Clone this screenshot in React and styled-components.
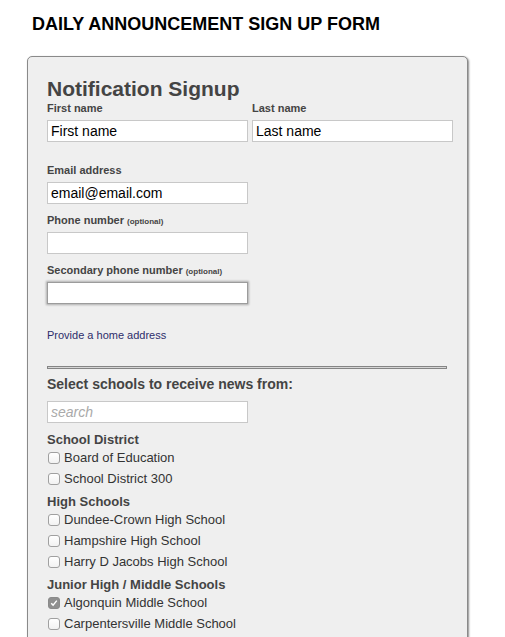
import styled, { createGlobalStyle } from 'styled-components';

const GlobalStyle = createGlobalStyle`
    body {
        margin: 0;
        background: #fff;
        font-family: "Liberation Sans", Arial, Helvetica, sans-serif;
    }
`;

const Page = styled.div`
    padding-top: 14px;
    padding-bottom: 40px;
`;

const Title = styled.h1`
    margin: 0 0 0 32px;
    font-size: 18px;
    line-height: 21px;
    font-weight: bold;
    color: #000;
`;

const Panel = styled.div`
    box-sizing: border-box;
    width: 441px;
    margin: 21px 0 0 27px;
    padding: 20px 19px 40px;
    background: #efefef;
    border: 1px solid #8a8a8a;
    border-radius: 5px;
    box-shadow: 1px 1px 2px rgba(0, 0, 0, 0.45);
`;

const Heading = styled.h2`
    margin: 0;
    font-size: 21px;
    line-height: 24px;
    font-weight: bold;
    color: #444;
`;

const NameRow = styled.div`
    display: grid;
    grid-template-columns: 201px 201px;
    column-gap: 4px;
    margin: 1px 0 22px;
`;

const Field = styled.div`
    display: flex;
    flex-direction: column;
    margin-bottom: ${(p) => (p.$last ? 0 : '10px')};
`;

const Label = styled.label`
    font-size: 11px;
    line-height: 13px;
    font-weight: bold;
    color: #444;
    margin-bottom: 5px;
`;

const Optional = styled.span`
    font-size: 8px;
    line-height: 1;
    font-weight: bold;
    margin-left: 3px;
`;

const TextInput = styled.input`
    box-sizing: border-box;
    width: 201px;
    height: 22px;
    margin: 0;
    padding: 0 3px;
    font-family: inherit;
    font-size: 14px;
    color: #000;
    background: #fff;
    border: 1px solid ${(p) => (p.$focused ? '#9c9c9c' : '#c8c8c8')};
    border-radius: 0;
    outline: none;
    box-shadow: ${(p) => (p.$focused ? '0 0 2px 1px rgba(0, 0, 0, 0.28)' : 'none')};

    &::placeholder {
        color: #aaa;
        font-style: italic;
    }
`;

const AddressLink = styled.a`
    display: block;
    margin-top: 25px;
    font-size: 11px;
    line-height: 13px;
    color: #2d2d6b;
    text-decoration: none;
`;

const Divider = styled.div`
    box-sizing: content-box;
    width: 398px;
    height: 1px;
    margin-top: 24px;
    background: #d6d6d6;
    border: 1px solid #858585;
`;

const SectionTitle = styled.h3`
    margin: 7px 0 8px;
    font-size: 14px;
    line-height: 17px;
    font-weight: bold;
    color: #444;
`;

const SchoolList = styled.div`
    margin-top: 9px;
`;

const GroupHeading = styled.div`
    margin-top: 5px;
    font-size: 13px;
    line-height: 15px;
    font-weight: bold;
    color: #444;
`;

const CheckRow = styled.label`
    display: flex;
    align-items: center;
    gap: 4px;
    height: 21px;
    font-size: 13px;
    color: #333;
`;

const Box = styled.span`
    box-sizing: border-box;
    width: 12px;
    height: 12px;
    margin-left: 1px;
    border-radius: 3px;
    border: 1px solid ${(p) => (p.$checked ? '#8a8a8a' : '#a0a0a0')};
    background: ${(p) => (p.$checked ? '#8f8f8f' : 'linear-gradient(#fff, #f2f2f2)')};
    display: flex;
    align-items: center;
    justify-content: center;
`;

const schoolGroups = [
    { name: 'School District', schools: ['Board of Education', 'School District 300'] },
    { name: 'High Schools', schools: ['Dundee-Crown High School', 'Hampshire High School', 'Harry D Jacobs High School'] },
    { name: 'Junior High / Middle Schools', schools: ['Algonquin Middle School', 'Carpentersville Middle School'] },
];

const checked = ['Algonquin Middle School'];

const Checkbox = ({ on }) => (
    <Box $checked={on}>
        {on && (
            <svg width="8" height="8" viewBox="0 0 8 8">
                <path d="M1.2 4.2 L3.1 6.1 L6.8 1.6" fill="none" stroke="#fff" strokeWidth="1.4" />
            </svg>
        )}
    </Box>
);

const App = () => (
    <Page>
        <GlobalStyle />
        <Title>DAILY ANNOUNCEMENT SIGN UP FORM</Title>
        <Panel>
            <Heading>Notification Signup</Heading>
            <NameRow>
                <Field $last>
                    <Label>First name</Label>
                    <TextInput defaultValue="First name" />
                </Field>
                <Field $last>
                    <Label>Last name</Label>
                    <TextInput defaultValue="Last name" />
                </Field>
            </NameRow>
            <Field>
                <Label>Email address</Label>
                <TextInput defaultValue="email@email.com" />
            </Field>
            <Field>
                <Label>Phone number<Optional>(optional)</Optional></Label>
                <TextInput />
            </Field>
            <Field $last>
                <Label>Secondary phone number<Optional>(optional)</Optional></Label>
                <TextInput $focused />
            </Field>
            <AddressLink href="#">Provide a home address</AddressLink>
            <Divider />
            <SectionTitle>Select schools to receive news from:</SectionTitle>
            <TextInput placeholder="search" />
            <SchoolList>
                {schoolGroups.map((group) => (
                    <div key={group.name}>
                        <GroupHeading>{group.name}</GroupHeading>
                        {group.schools.map((school) => (
                            <CheckRow key={school}>
                                <Checkbox on={checked.includes(school)} />
                                {school}
                            </CheckRow>
                        ))}
                    </div>
                ))}
            </SchoolList>
        </Panel>
    </Page>
);

export default App;
